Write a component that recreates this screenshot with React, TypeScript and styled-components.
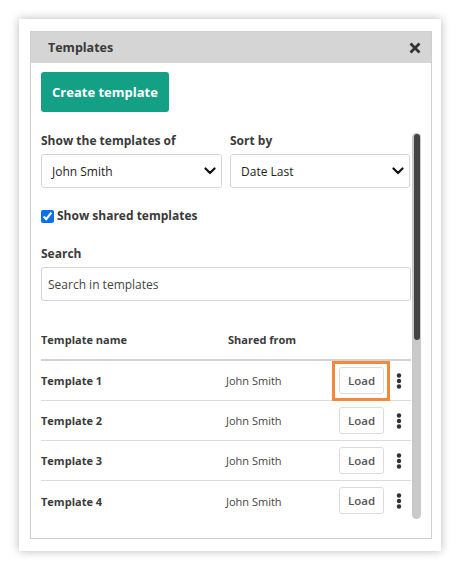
import React from "react";
import styled, { createGlobalStyle } from "styled-components";

const GlobalStyle = createGlobalStyle`
  html, body { margin: 0; padding: 0; background: #fff; }
  body { font-family: "Open Sans", "Noto Sans", sans-serif; color: #333; }
  * { box-sizing: border-box; }
`;

const Page = styled.div`
  width: 460px;
  height: 570px;
  padding: 19px;
`;

const Card = styled.div`
  width: 422px;
  height: 532px;
  background: #fff;
  box-shadow: 0 0 9px rgba(0, 0, 0, 0.28);
  padding: 12px 9px 12px 11px;
  display: flex;
`;

const Panel = styled.div`
  flex: 1;
  border: 1px solid #cfcfcf;
  display: flex;
  flex-direction: column;
`;

const Header = styled.div`
  height: 31px;
  flex: none;
  background: #d5d5d5;
  display: flex;
  align-items: center;
  justify-content: space-between;
  padding: 0 9px 0 17px;
`;

const Title = styled.h2`
  margin: 0;
  font-size: 12.5px;
  line-height: 16px;
  font-weight: 700;
  color: #3a3a3a;
`;

const CloseButton = styled.button`
  border: none;
  background: none;
  padding: 0;
  width: 14px;
  height: 14px;
  display: flex;
  align-items: center;
  justify-content: center;
  cursor: pointer;
`;

const Body = styled.div`
  flex: 1;
  display: flex;
  flex-direction: column;
  padding: 9px 10px 19px 10px;
  min-height: 0;
`;

const CreateButton = styled.button`
  align-self: flex-start;
  width: 128px;
  height: 40px;
  border: none;
  border-radius: 3px;
  background: #14a085;
  color: #fff;
  font-family: inherit;
  font-size: 13px;
  font-weight: 700;
  margin-bottom: 20px;
  cursor: pointer;
`;

const ScrollRow = styled.div`
  flex: 1;
  display: flex;
  gap: 1px;
  min-height: 0;
`;

const Content = styled.div`
  flex: 1;
  overflow: hidden;
  display: flex;
  flex-direction: column;
`;

const Track = styled.div`
  width: 9px;
  flex: none;
  margin-top: 1px;
  background: #c9c9c9;
  border-radius: 5px;
  display: flex;
  justify-content: center;
  padding-top: 1px;
`;

const Thumb = styled.div`
  width: 6px;
  height: 206px;
  background: #444;
  border-radius: 3px;
`;

const FilterGrid = styled.div`
  display: grid;
  grid-template-columns: 181px 180px;
  column-gap: 8px;
`;

const Field = styled.div`
  display: flex;
  flex-direction: column;
`;

const Label = styled.label`
  font-size: 12px;
  font-weight: 700;
  line-height: 18px;
  color: #3a3a3a;
  margin-bottom: 4px;
`;

const SelectBox = styled.div`
  height: 34px;
  border: 1px solid #d6d6d6;
  border-radius: 3px;
  display: flex;
  align-items: center;
  justify-content: space-between;
  padding: 0 5px 0 10px;
  font-size: 12px;
  color: #222;
`;

const CheckRow = styled.label`
  display: flex;
  align-items: center;
  gap: 3px;
  margin-top: 19px;
  font-size: 12px;
  font-weight: 700;
  color: #3a3a3a;
  line-height: 18px;
`;

const Checkbox = styled.input`
  width: 13px;
  height: 13px;
  margin: 0;
  accent-color: #0b6ff0;
`;

const SearchField = styled(Field)`
  margin-top: 20px;
`;

const SearchInput = styled.input`
  height: 34px;
  border: 1px solid #d6d6d6;
  border-radius: 3px;
  padding: 0 6px;
  font-family: inherit;
  font-size: 12px;
  color: #333;
  &::placeholder { color: #444; opacity: 1; }
`;

const Table = styled.div`
  margin-top: 19px;
  display: flex;
  flex-direction: column;
`;

const Row = styled.div<{ $head?: boolean }>`
  display: grid;
  grid-template-columns: 185px 1fr auto;
  align-items: center;
  height: ${(p) => (p.$head ? "41px" : "40px")};
  border-bottom: ${(p) => (p.$head ? "2px solid #d2d2d2" : "1px solid #dcdcdc")};
  &:last-child { border-bottom: none; }
`;

const HeadCell = styled.div<{ $indent?: number }>`
  font-size: 11px;
  font-weight: 700;
  color: #3a3a3a;
  padding-left: ${(p) => p.$indent ?? 0}px;
`;

const NameCell = styled.div`
  font-size: 11px;
  font-weight: 700;
  color: #3a3a3a;
`;

const OwnerCell = styled.div`
  font-size: 11px;
  color: #444;
`;

const Actions = styled.div`
  display: flex;
  align-items: center;
  gap: 12px;
  padding-right: 9px;
`;

const Highlight = styled.div<{ $on?: boolean }>`
  display: flex;
  border: 3px solid ${(p) => (p.$on ? "#f5883a" : "transparent")};
  padding: 3px 3px 4px 4px;
  margin: -7px -6px -7px -7px;
`;

const LoadButton = styled.button`
  width: 45px;
  height: 27px;
  border: 1px solid #dcdcdc;
  border-radius: 3px;
  background: #fff;
  font-family: inherit;
  font-size: 11.5px;
  font-weight: 600;
  color: #555;
  padding: 0;
  cursor: pointer;
`;

const MoreButton = styled.button`
  border: none;
  background: none;
  padding: 0;
  width: 6px;
  height: 16px;
  display: flex;
  align-items: center;
  justify-content: center;
  cursor: pointer;
`;

const Chevron = () => (
  <svg width="12" height="8" viewBox="0 0 12 8">
    <path d="M1.5 1.5 L6 6 L10.5 1.5" fill="none" stroke="#111" strokeWidth="2.2" strokeLinecap="round" strokeLinejoin="round" />
  </svg>
);

const CloseIcon = () => (
  <svg width="12" height="12" viewBox="0 0 12 12">
    <path d="M1.5 1.5 L10.5 10.5 M10.5 1.5 L1.5 10.5" stroke="#333" strokeWidth="2.8" strokeLinecap="butt" />
  </svg>
);

const Dots = () => (
  <svg width="6" height="16" viewBox="0 0 6 16">
    <circle cx="3" cy="2.5" r="2.2" fill="#333" />
    <circle cx="3" cy="8" r="2.2" fill="#333" />
    <circle cx="3" cy="13.5" r="2.2" fill="#333" />
  </svg>
);

const templates = ["Template 1", "Template 2", "Template 3", "Template 4"];

export default function App() {
  return (
    <>
      <GlobalStyle />
      <Page>
        <Card>
          <Panel>
            <Header>
              <Title>Templates</Title>
              <CloseButton aria-label="Close">
                <CloseIcon />
              </CloseButton>
            </Header>
            <Body>
              <CreateButton>Create template</CreateButton>
              <ScrollRow>
                <Content>
                  <FilterGrid>
                    <Field>
                      <Label>Show the templates of</Label>
                      <SelectBox>
                        <span>John Smith</span>
                        <Chevron />
                      </SelectBox>
                    </Field>
                    <Field>
                      <Label>Sort by</Label>
                      <SelectBox>
                        <span>Date Last</span>
                        <Chevron />
                      </SelectBox>
                    </Field>
                  </FilterGrid>
                  <CheckRow>
                    <Checkbox type="checkbox" defaultChecked />
                    Show shared templates
                  </CheckRow>
                  <SearchField>
                    <Label>Search</Label>
                    <SearchInput placeholder="Search in templates" />
                  </SearchField>
                  <Table>
                    <Row $head>
                      <HeadCell>Template name</HeadCell>
                      <HeadCell $indent={2}>Shared from</HeadCell>
                      <span />
                    </Row>
                    {templates.map((t, i) => (
                      <Row key={t}>
                        <NameCell>{t}</NameCell>
                        <OwnerCell>John Smith</OwnerCell>
                        <Actions>
                          <Highlight $on={i === 0}>
                            <LoadButton>Load</LoadButton>
                          </Highlight>
                          <MoreButton aria-label="More">
                            <Dots />
                          </MoreButton>
                        </Actions>
                      </Row>
                    ))}
                  </Table>
                </Content>
                <Track>
                  <Thumb />
                </Track>
              </ScrollRow>
            </Body>
          </Panel>
        </Card>
      </Page>
    </>
  );
}
